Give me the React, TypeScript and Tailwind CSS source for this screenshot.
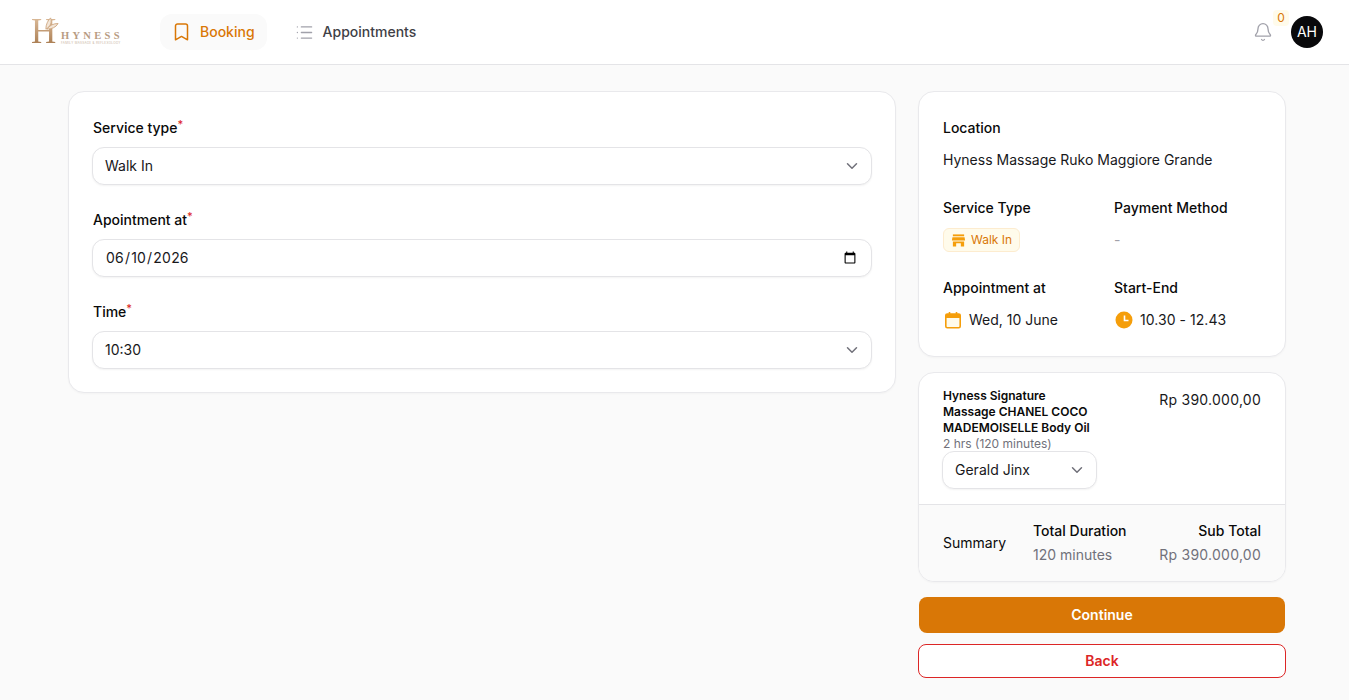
import React from 'react'
import { List, Bell, ChevronDown } from 'lucide-react'

const Logo = () => (
    <div className="flex items-end w-[92px] h-[26px] select-none">
        <div className="relative w-[30px] h-[26px] shrink-0">
            <span className="block text-[35px] leading-[26px] bg-gradient-to-b from-[#d9b896] to-[#a97c50] bg-clip-text text-transparent font-['Liberation_Serif',serif]">H</span>
            <svg viewBox="0 0 16 16" className="absolute left-[13px] -top-[3px] w-[15px] h-[15px]" fill="#f3e6d8" stroke="#cfa983" strokeWidth="1">
                <path d="M2 14c0-5 2-9 5-12 1.500 4 .5 9-5 12Z" />
                <path d="M3 14c3-4 7-6 12-6-2 4-7 6-12 6Z" />
            </svg>
        </div>
        <div className="flex flex-col -mb-[1px]">
            <span className="text-[10.5px] leading-[11px] font-bold tracking-[3.300px] text-[#b89c83] font-['Liberation_Serif',serif]">HYNESS</span>
            <span className="text-[3px] leading-[5px] tracking-[0.3px] text-[#c9b5a2] whitespace-nowrap">FAMILY MASSAGE &amp; REFLEXOLOGY</span>
        </div>
    </div>
)

const Label = ({ text }: { text: string }) => (
    <label className="block text-sm leading-[20px] text-[#0a0a0a] mb-[9px] font-medium">
        {text}
        <sup className="text-[#dc2626] text-[11px] leading-none">*</sup>
    </label>
)

const SelectBox = ({ value, className = 'w-[calc(100%+2px)] -mx-px' }: { value: string; className?: string }) => (
    <button type="button" className={`${className} h-[38px] flex items-center justify-between pl-3 pr-[10px] bg-white border border-[#e4e4e7] rounded-xl shadow-[0_1px_2px_rgba(0,0,0,0.05)] text-sm text-[#18181b]`}>
        <span>{value}</span>
        <ChevronDown className="w-[18px] h-[18px] text-[#71717a]" strokeWidth={2} />
    </button>
)

const InfoLabel = ({ children }: { children: React.ReactNode }) => (
    <div className="text-sm leading-[20px] font-medium text-[#0a0a0a]">{children}</div>
)

export default function App() {
    return (
        <div className="min-h-[700px] bg-[#fafafa] font-['Inter',sans-serif]">
            <header className="h-[65px] bg-white border-b border-[#e4e4e7] flex items-center justify-between pl-[31px] pr-[26px]">
                <div className="flex items-center">
                    <Logo />
                    <nav className="flex items-center ml-[37px] gap-[16px]">
                        <a className="h-9 px-3 flex items-center gap-[9px] rounded-xl bg-[#fafafa] text-sm font-medium text-[#d97706]">
                            <svg viewBox="0 0 19 18" className="w-[19px] h-[18px]" fill="none" stroke="currentColor" strokeWidth="1.5" strokeLinejoin="round">
                                <path d="M3.500 3a2 2 0 0 1 2-2h8a2 2 0 0 1 2 2v13.800l-6-3.400-6 3.400Z" />
                            </svg>
                            Booking
                        </a>
                        <a className="h-9 px-3 flex items-center gap-[9px] text-sm font-medium text-[#3f3f46]">
                            <List className="w-[19px] h-[19px] text-[#a1a1aa]" strokeWidth={1.6} />
                            Appointments
                        </a>
                    </nav>
                </div>
                <div className="flex items-center gap-[18px]">
                    <div className="relative">
                        <Bell className="w-5 h-5 text-[#a1a1aa]" strokeWidth={1.6} />
                        <span className="absolute left-[20px] -top-[12px] w-[16px] h-[16px] rounded-[4px] bg-[#fffbeb] text-[#d97706] text-xs leading-[16px] text-center">0</span>
                    </div>
                    <div className="w-8 h-8 rounded-full bg-[#09090b] text-white text-sm flex items-center justify-center">AH</div>
                </div>
            </header>

            <main className="flex items-start gap-[22px] pl-[68px] pt-[26px] w-[1286px]">
                <section className="w-[828px] h-[302px] bg-white border border-[#e9e9ec] rounded-2xl shadow-[0_1px_2px_rgba(0,0,0,0.03)] px-6 pt-[26px] flex flex-col gap-[25px]">
                    <div>
                        <Label text="Service type" />
                        <SelectBox value="Walk In" />
                    </div>
                    <div>
                        <Label text="Apointment at" />
                        <input
                            type="date"
                            defaultValue="2026-06-10"
                            className="w-[calc(100%+2px)] -mx-px h-[38px] pl-3 pr-3 bg-white border border-[#e4e4e7] rounded-xl shadow-[0_1px_2px_rgba(0,0,0,0.05)] text-sm tracking-[0.2px] text-[#18181b]"
                        />
                    </div>
                    <div>
                        <Label text="Time" />
                        <SelectBox value="10:30" />
                    </div>
                </section>

                <aside className="w-[368px] flex flex-col">
                    <div className="h-[266px] bg-white border border-[#e9e9ec] rounded-2xl shadow-[0_1px_2px_rgba(0,0,0,0.03)] px-6 pt-[26px]">
                        <InfoLabel>Location</InfoLabel>
                        <div className="mt-3 text-sm leading-[20px] text-[#18181b]">Hyness Massage Ruko Maggiore Grande</div>
                        <div className="grid grid-cols-[171px_1fr] mt-[28px]">
                            <div>
                                <InfoLabel>Service Type</InfoLabel>
                                <div className="mt-[10px] h-6 w-[77px] flex items-center justify-center gap-[5px] bg-[#fffbeb] border border-[#fdeccf] rounded-md text-xs text-[#d97706]">
                                    <svg viewBox="0 0 16 16" className="w-[15px] h-[15px]" fill="#f59e0b">
                                        <rect x="2" y="1.500" width="12" height="2" />
                                        <path d="M1.500 4.500h13l.5 3.500H1Z" />
                                        <path d="M2 9h12v5.500h-3.500V11h-5v3.500H2Z" />
                                    </svg>
                                    Walk In
                                </div>
                            </div>
                            <div>
                                <InfoLabel>Payment Method</InfoLabel>
                                <div className="mt-[10px] h-6 flex items-center text-sm text-[#a1a1aa]">-</div>
                            </div>
                            <div className="mt-[26px]">
                                <InfoLabel>Appointment at</InfoLabel>
                                <div className="mt-[12px] flex items-center gap-[8px] text-sm leading-[20px] text-[#18181b]">
                                    <svg viewBox="0 0 18 18" className="w-[18px] h-[18px]">
                                        <rect x="2.800" y="3" width="14.400" height="13.800" rx="1.500" fill="#fffbeb" stroke="#f59e0b" strokeWidth="1.600" />
                                        <rect x="2.800" y="3" width="14.400" height="4" fill="#f59e0b" />
                                        <path d="M6.500 1v2.500M13.500 1v2.500" stroke="#f59e0b" strokeWidth="1.600" />
                                    </svg>
                                    Wed, 10 June
                                </div>
                            </div>
                            <div className="mt-[26px]">
                                <InfoLabel>Start-End</InfoLabel>
                                <div className="mt-[12px] flex items-center gap-[7px] text-sm leading-[20px] tracking-[0.05px] text-[#18181b]">
                                    <svg viewBox="0 0 18 18" className="ml-px w-[18px] h-[18px]">
                                        <circle cx="9" cy="9" r="8.500" fill="#f59e0b" />
                                        <path d="M9.500 4.500V9.500H13.500" fill="none" stroke="#fff" strokeWidth="1.600" />
                                    </svg>
                                    10.30 - 12.43
                                </div>
                            </div>
                        </div>
                    </div>

                    <div className="mt-[15px] h-[210px] bg-white border border-[#e9e9ec] rounded-2xl shadow-[0_1px_2px_rgba(0,0,0,0.03)] flex flex-col overflow-hidden">
                        <div className="h-[132px] px-6 pt-[15px] flex justify-between border-b border-[#e4e4e7]">
                            <div className="w-[154px]">
                                <div className="text-xs leading-[16px] font-semibold text-[#0a0a0a]">Hyness Signature Massage CHANEL COCO MADEMOISELLE Body Oil</div>
                                <div className="text-xs leading-[16px] text-[#71717a]">2 hrs (120 minutes)</div>
                                <SelectBox value="Gerald Jinx" className="w-[155px] -ml-[1px] -mt-[1px]" />
                            </div>
                            <div className="text-sm leading-[20px] tracking-[0.25px] text-[#18181b] pt-[2px]">Rp 390.000,00</div>
                        </div>
                        <div className="flex-1 bg-[#fafafa] px-6 flex items-center justify-between">
                            <div className="flex items-center">
                                <div className="w-[90px] text-sm text-[#0a0a0a]">Summary</div>
                                <div>
                                    <div className="text-sm leading-[20px] font-medium text-[#0a0a0a]">Total Duration</div>
                                    <div className="mt-1 text-sm leading-[20px] text-[#71717a]">120 minutes</div>
                                </div>
                            </div>
                            <div className="text-right">
                                <div className="text-sm leading-[20px] font-medium text-[#0a0a0a]">Sub Total</div>
                                <div className="mt-1 text-sm leading-[20px] tracking-[0.25px] text-[#71717a]">Rp 390.000,00</div>
                            </div>
                        </div>
                    </div>

                    <button type="button" className="mt-[15px] mx-[1px] h-9 rounded-lg bg-[#d97706] text-white text-sm font-semibold">Continue</button>
                    <button type="button" className="mt-[11px] h-[34px] rounded-lg bg-white border border-[#dc2626] text-[#dc2626] text-sm font-semibold">Back</button>
                </aside>
            </main>
        </div>
    )
}
